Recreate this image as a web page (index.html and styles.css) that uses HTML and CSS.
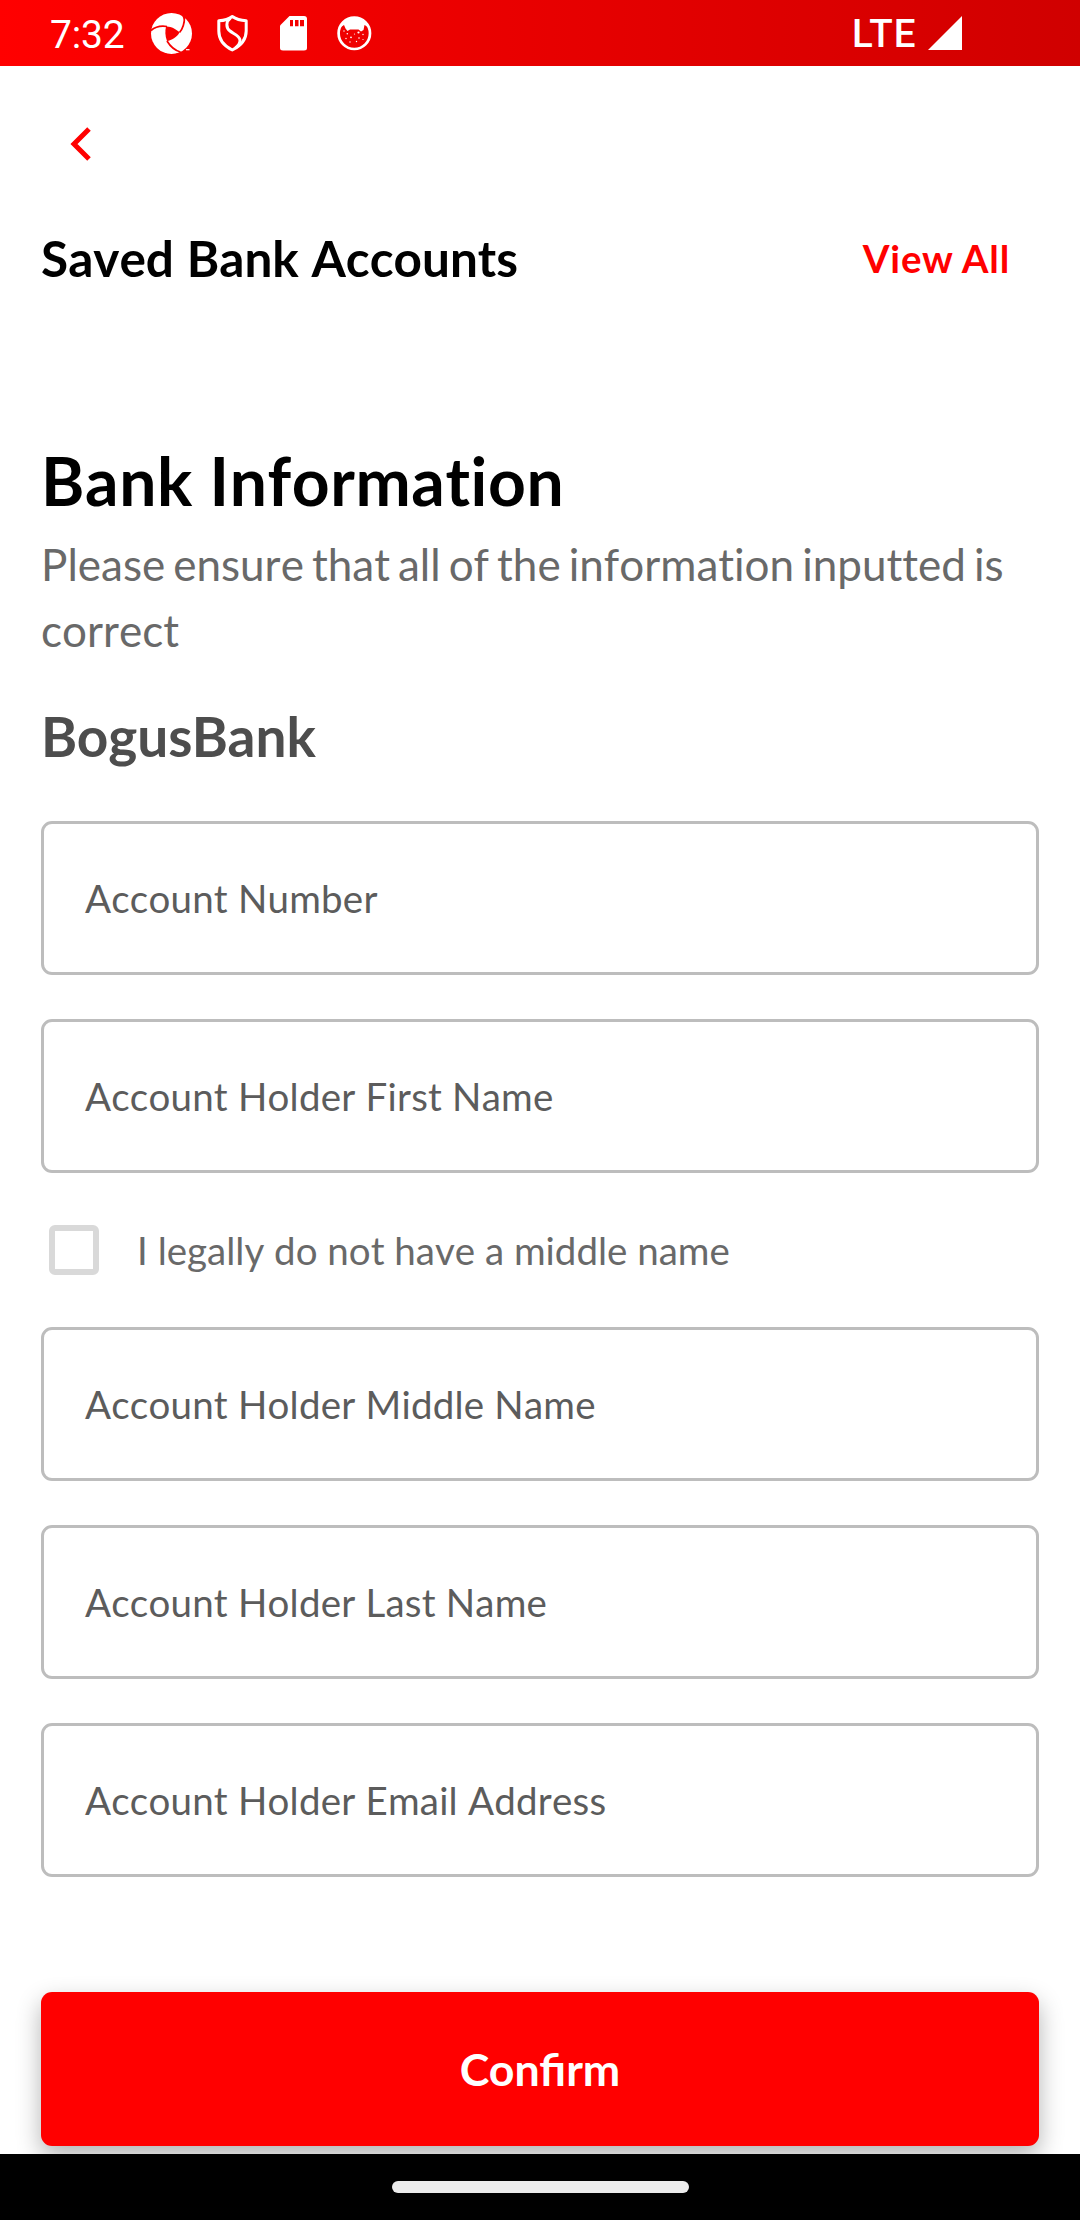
FILE: index.html
```html
<!DOCTYPE html>
<html lang="en">
<head>
<meta charset="utf-8">
<title>Bank Information</title>
<link rel="stylesheet" href="styles.css">
</head>
<body>
<header class="status-bar">
  <span class="clock">7:32</span>
  <svg class="status-icon icon-aperture" width="44" height="44" viewBox="150 11 44 44">
    <circle cx="171.5" cy="33.4" r="20.5" fill="#fff"/>
    <path d="M166 26.5C170.500 26 176 29 179.500 32.500C177 37 171.500 40.500 167 41C165 36 165 31 166 26.500Z" fill="#f80000"/>
    <path d="M151 30.500C155 27 161 25.500 167 26.500M184.500 17C184.500 23 183 28.500 179.500 32.500M167 41C170 46 175 50.500 180.500 52" fill="none" stroke="#f80000" stroke-width="1.7"/>
    <path d="M181 13L184 20L185.500 17L188 16Z" fill="#f80000"/>
    <path d="M186 49.700h3.500" stroke="#fff" stroke-width="1.200"/>
  </svg>
  <svg class="status-icon icon-shield" width="34" height="40" viewBox="215 13 34 40">
    <path d="M232.300 16.500C228.500 19.500 224 20.500 218.800 20.800V31C218.800 39.500 224 46 232.300 50C240.500 46 246.200 39.500 246.200 31V20.800C241 20.500 236.500 19.500 232.300 16.500Z" fill="none" stroke="#fff" stroke-width="3" stroke-linejoin="round"/>
    <path d="M230.500 18C225.500 21.500 226 28 230 31C233 33.500 239.500 35.500 240 40C240.200 43 238 46 235.500 48" fill="none" stroke="#fff" stroke-width="3"/>
  </svg>
  <svg class="status-icon icon-sd" width="27" height="35" viewBox="0 0 27 35">
    <path d="M9.500 0H24Q27 0 27 3V32Q27 34.500 24 34.500H3Q0 34.500 0 32V9.500Z" fill="#fff"/>
    <path d="M10 4h3v6.300h-3zM15 4h3.500v6.300h-3.500zM20 4h4v6.300h-4z" fill="#f40000"/>
  </svg>
  <svg class="status-icon icon-cat" width="36" height="36" viewBox="336 15 36 36">
    <circle cx="354.300" cy="33.300" r="15.700" fill="none" stroke="#fff" stroke-width="2.700"/>
    <path d="M341 27C344 20 349 17.500 354.300 17.500S365 20 368 27L364.500 25L363.500 30L361 31.500L358.500 29.500H350L347.500 31L345.500 28.500L344 25Z" fill="#fff"/>
    <g fill="#fff">
      <circle cx="344" cy="31" r=".7"/><circle cx="347.300" cy="33.800" r=".8"/><circle cx="351" cy="37.300" r=".9"/><circle cx="358.500" cy="32.500" r="1.100"/><circle cx="354.500" cy="34" r=".6"/><circle cx="363" cy="34.500" r=".7"/><circle cx="359" cy="38" r=".8"/><circle cx="346" cy="38.500" r=".7"/><circle cx="356.500" cy="41.500" r=".7"/><circle cx="350" cy="42" r=".7"/><circle cx="363" cy="39.500" r=".6"/>
    </g>
  </svg>
  <span class="network">LTE</span>
  <svg class="status-icon icon-signal" width="35" height="35" viewBox="0 0 35 35"><path d="M0 34L34 0V34Z" fill="#fff"/></svg>
</header>

<main class="screen">
  <nav class="back-row">
    <svg width="24" height="36" viewBox="0 0 24 36"><path d="M19 3L4 18L19 33" fill="none" stroke="#f00" stroke-width="5"/></svg>
  </nav>
  <section class="saved">
    <h2 class="saved-title">Saved Bank Accounts</h2>
    <a class="view-all">View All</a>
  </section>
  <h1 class="heading">Bank Information</h1>
  <p class="hint">Please ensure that all of the information inputted is correct</p>
  <h3 class="bank-name">BogusBank</h3>
  <form class="form">
    <div class="field"><span class="label">Account Number</span></div>
    <div class="field"><span class="label">Account Holder First Name</span></div>
    <div class="check-row"><span class="checkbox"></span><span class="check-label">I legally do not have a middle name</span></div>
    <div class="field"><span class="label">Account Holder Middle Name</span></div>
    <div class="field"><span class="label">Account Holder Last Name</span></div>
    <div class="field"><span class="label">Account Holder Email Address</span></div>
  </form>
  <div class="confirm"><span class="confirm-label">Confirm</span></div>
</main>
<footer class="nav-bar"><span class="pill"></span></footer>
</body>
</html>
```
FILE: styles.css
```css
* { box-sizing: border-box; }
body {
  margin: 0;
  width: 1080px;
  height: 2220px;
  display: flex;
  flex-direction: column;
  overflow: hidden;
  background: #fff;
  color: #000;
  font-family: Lato, "Liberation Sans", sans-serif;
}
h1, h2, h3, p { margin: 0; }
svg { display: block; flex: none; }

.status-bar {
  flex: none;
  display: flex;
  align-items: flex-start;
  height: 66px;
  padding-left: 50px;
  background: linear-gradient(90deg, #f00, #d00000);
  color: #fff;
}
.clock { width: 100px; font: 400 39px/70px Roboto, sans-serif; letter-spacing: -.2px; }
.icon-aperture { margin-top: 11px; }
.icon-shield { margin: 13px 0 0 21px; }
.icon-sd { margin: 16px 0 0 31px; }
.icon-cat { margin: 15px 0 0 29px; }
.network { width: 76px; margin-left: 480px; font: 500 38.500px/67px Roboto, sans-serif; letter-spacing: 1.100px; }
.icon-signal { margin-top: 16px; }

.screen {
  flex: none;
  display: flex;
  flex-direction: column;
  height: 2088px;
  padding: 0 41px;
  overflow: hidden;
}
.back-row { height: 162px; padding: 60px 0 0 28.500px; }
.saved {
  display: flex;
  justify-content: space-between;
  align-items: center;
  height: 60px;
  padding-right: 29px;
}
.saved-title { font-size: 49.500px; line-height: 60px; font-weight: 700; font-kerning: none; word-spacing: .7px; }
.view-all { color: #f00; font-size: 38.500px; line-height: 60px; font-weight: 700; letter-spacing: .8px; }
.heading { margin-top: 153px; font-size: 66px; line-height: 80px; font-weight: 700; font-kerning: none; letter-spacing: .6px; }
.hint {
  margin-top: 10px;
  color: #696969;
  font-size: 44px;
  line-height: 66px;
  font-kerning: none;
  font-variant-ligatures: none;
  word-spacing: -3.200px;
}
.bank-name { margin-top: 40px; color: #4d4d4d; font-size: 55px; line-height: 66px; font-weight: 700; }

.form { display: flex; flex-direction: column; gap: 44px; margin-top: 52px; }
.field {
  display: flex;
  align-items: center;
  height: 154px;
  padding-left: 41px;
  border: 3px solid #bdbdbd;
  border-radius: 11px;
}
.label { color: #5c5c5c; font-size: 38.500px; font-kerning: none; letter-spacing: .21px; }
.check-row { display: flex; align-items: center; height: 66px; padding-left: 8px; }
.checkbox { width: 50px; height: 50px; border: 6px solid #d9d9d9; border-radius: 6px; }
.check-label { margin-left: 38px; color: #696969; font-size: 38.500px; font-kerning: none; }

.confirm {
  display: flex;
  flex: none;
  align-items: center;
  justify-content: center;
  height: 154px;
  margin-top: 115px;
  border-radius: 11px;
  background: #f00;
  color: #fff;
  box-shadow: 0 10px 24px rgba(0, 0, 0, .3);
}
.confirm-label { font-size: 44.700px; font-weight: 700; }

.nav-bar { flex: none; height: 66px; padding-top: 27px; background: #000; }
.pill { display: block; width: 297px; height: 12px; margin: 0 auto; border-radius: 6px; background: #ececec; }
```
